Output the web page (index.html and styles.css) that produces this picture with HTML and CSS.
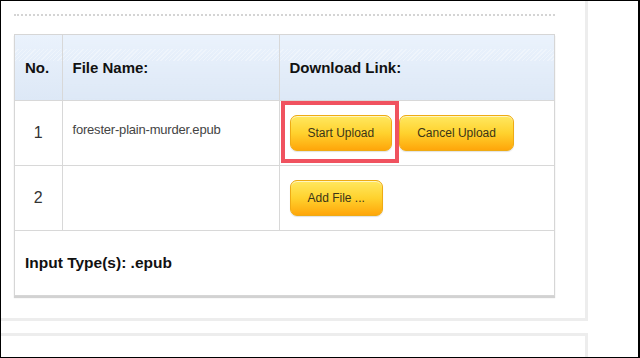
FILE: index.html
```html
<!DOCTYPE html>
<html lang="en">
<head>
    <meta charset="UTF-8">
    <meta name="viewport" content="width=device-width, initial-scale=1.0">
    <title>Upload Files</title>
    <link rel="stylesheet" href="styles.css">
</head>
<body>
    <div class="panel">
        <div class="divider"></div>
        <div class="card">
            <table class="files">
                <colgroup>
                    <col class="col-no">
                    <col class="col-name">
                    <col class="col-link">
                </colgroup>
                <thead>
                    <tr>
                        <th>No.</th>
                        <th>File Name:</th>
                        <th>Download Link:</th>
                    </tr>
                </thead>
                <tbody>
                    <tr>
                        <td class="num">1</td>
                        <td class="name">forester-plain-murder.epub</td>
                        <td class="links">
                            <span class="highlight"><button class="btn">Start Upload</button></span>
                            <button class="btn">Cancel Upload</button>
                        </td>
                    </tr>
                    <tr>
                        <td class="num">2</td>
                        <td class="name"></td>
                        <td class="links"><button class="btn">Add File ...</button></td>
                    </tr>
                </tbody>
                <tfoot>
                    <tr>
                        <td colspan="3" class="types">Input Type(s): .epub</td>
                    </tr>
                </tfoot>
            </table>
        </div>
    </div>
    <div class="panel panel-next"></div>
</body>
</html>
```

FILE: styles.css
```css
html, body {
    margin: 0;
    height: 100%;
}
body {
    box-sizing: border-box;
    height: 358px;
    border: 1px solid #000;
    border-right-width: 2px;
    background: #fff;
    overflow: hidden;
    font-family: "Liberation Sans", Arial, sans-serif;
    color: #222;
}
.panel {
    width: 587px;
    box-sizing: border-box;
    padding: 13px 30px 22px 13px;
    border-right: 3px solid #ededed;
    border-bottom: 3px solid #ededed;
}
.panel-next {
    margin-top: 12px;
    height: 40px;
    border-top: 3px solid #ededed;
    border-bottom: none;
}
.divider {
    border-top: 2px dotted #d4d4d4;
    margin-bottom: 18px;
}
.card {
    border: 1px solid #d6d6d6;
    box-shadow: 0 2px 1px #d2d2d2;
    background: #fff;
}
.files {
    width: 100%;
    border-collapse: collapse;
    table-layout: fixed;
}
.col-no { width: 47px; }
.col-name { width: 217px; }
.files th,
.files td {
    height: 65px;
    padding: 0 0 0 10px;
    border: 1px solid #d8d8d8;
    text-align: left;
    box-sizing: border-box;
}
.files tr:first-child th { border-top: none; }
.files th:first-child,
.files td:first-child { border-left: none; }
.files th:last-child,
.files td:last-child { border-right: none; }
.files tfoot td { border-bottom: none; }
.files th {
    font-size: 15px;
    font-weight: bold;
    color: #111;
    background:
        repeating-linear-gradient(135deg, rgba(255,255,255,0) 0 2px, rgba(255,255,255,0.35) 2px 3px) 0 14px / 100% 12px no-repeat,
        linear-gradient(#eaf2fc, #dde8f6);
}
.num {
    font-size: 16px;
    color: #333;
    text-align: center !important;
    padding: 0 !important;
}
.name {
    font-size: 13px;
    color: #444;
    letter-spacing: -0.2px;
    padding-bottom: 6px !important;
}
.links {
    font-size: 0;
}
.btn {
    height: 36px;
    padding: 0 17px;
    margin-right: 6px;
    font-family: "Liberation Sans", Arial, sans-serif;
    font-size: 12px;
    color: #3b3418;
    border: 1px solid #eeab14;
    border-radius: 7px;
    background: linear-gradient(#ffe860, #ffd22e 50%, #ffa60a);
    box-shadow: inset 0 1px 0 rgba(255,255,255,0.6), 0 1px 1px rgba(0,0,0,0.12);
    vertical-align: middle;
}
.highlight {
    position: relative;
    display: inline-block;
    vertical-align: middle;
    margin-right: 7px;
}
.highlight .btn {
    margin-right: 0;
}
.highlight::after {
    content: "";
    position: absolute;
    left: -9px;
    right: -7px;
    top: -14px;
    bottom: -12px;
    border: 4px solid #f0525f;
}
.types {
    font-size: 15.5px;
    font-weight: bold;
    color: #111;
}
```
